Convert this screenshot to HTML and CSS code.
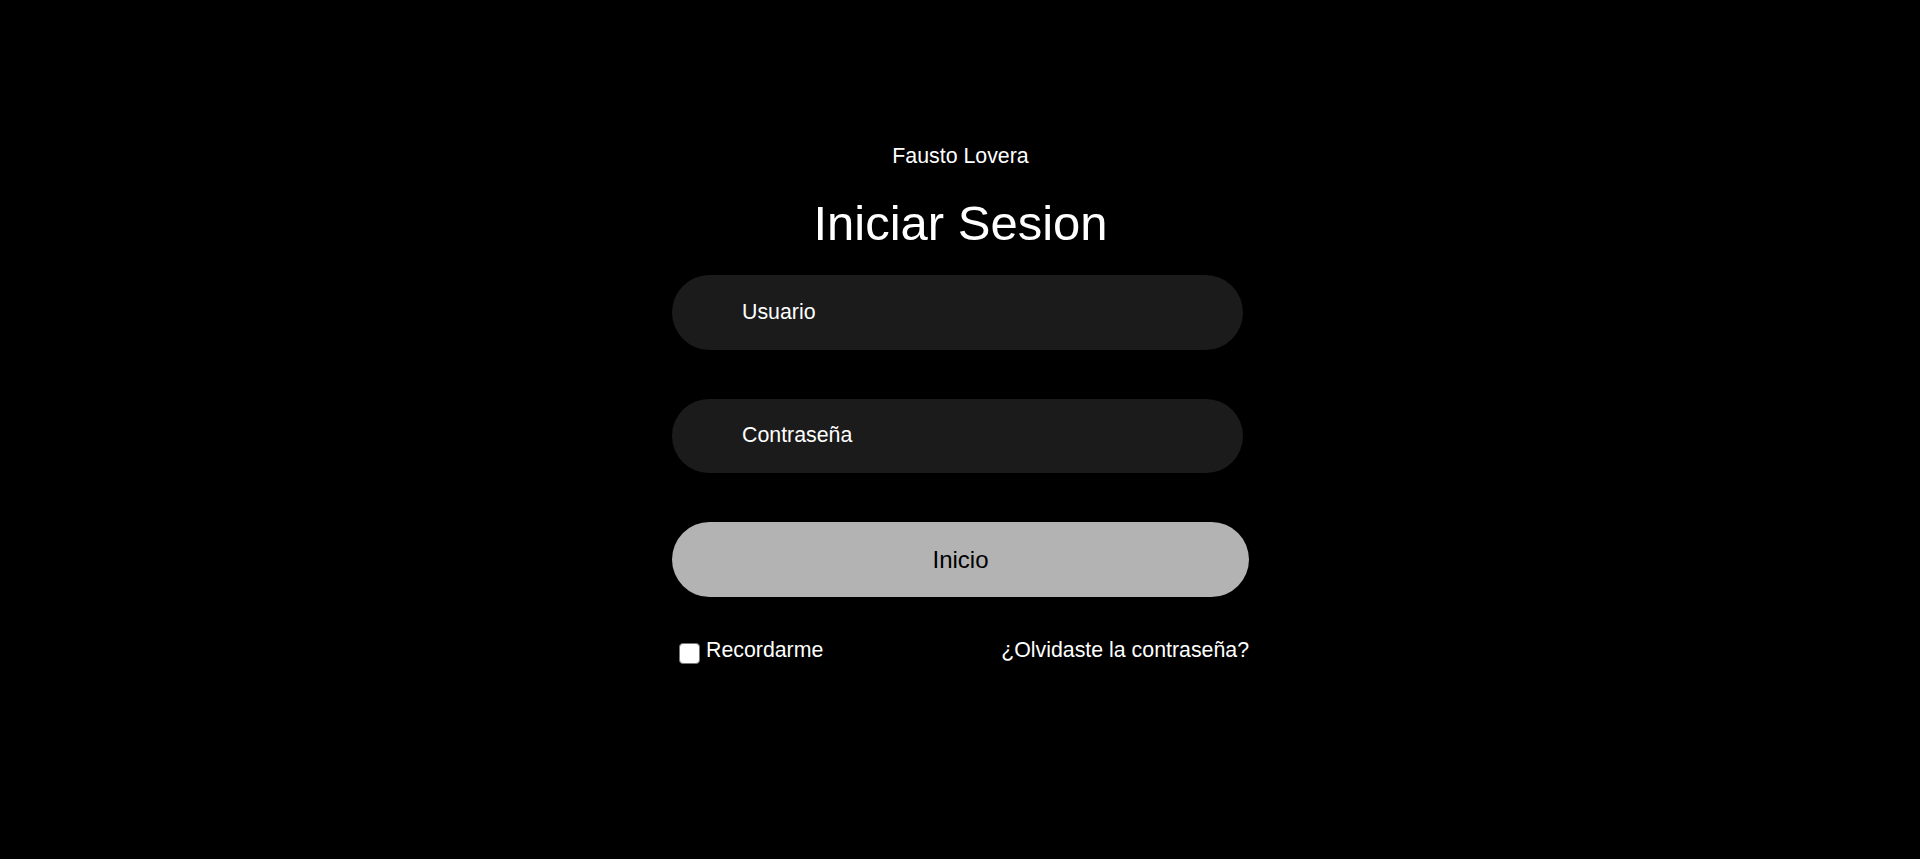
FILE: index.html
```html
<!DOCTYPE html>
<html lang="es">
<head>
<meta charset="utf-8">
<title>Iniciar Sesion</title>
<link rel="stylesheet" href="styles.css">
</head>
<body>
<main class="page">
  <p class="brand">Fausto Lovera</p>
  <h1 class="title">Iniciar Sesion</h1>
  <form class="form">
    <input class="field" type="text" placeholder="Usuario">
    <input class="field" type="password" placeholder="Contraseña">
    <button class="submit" type="button">Inicio</button>
    <div class="extras">
      <label class="remember"><input class="check" type="checkbox"><span>Recordarme</span></label>
      <a class="forgot" href="#">¿Olvidaste la contraseña?</a>
    </div>
  </form>
</main>
</body>
</html>
```
FILE: styles.css
```css
html, body {
  margin: 0;
  padding: 0;
  background: #000;
}
body {
  font-family: "Liberation Sans", Arial, sans-serif;
  color: #fff;
}
.page {
  display: flex;
  flex-direction: column;
  align-items: center;
  padding-top: 144px;
  padding-left: 1px;
}
.brand {
  margin: 0;
  font-size: 21.33px;
  line-height: 24px;
}
.title {
  margin: 27px 0 0;
  font-size: 49px;
  font-weight: normal;
  line-height: 56px;
}
.form {
  margin-top: 24px;
  width: 577px;
  display: flex;
  flex-direction: column;
  align-items: flex-start;
}
.field {
  box-sizing: border-box;
  width: 571px;
  height: 74.5px;
  margin: 0 0 49px;
  padding: 0 0 0 70px;
  border: none;
  border-radius: 38px;
  background: #1b1b1b;
  color: #fff;
  font-family: "Liberation Sans", Arial, sans-serif;
  font-size: 21.33px;
  outline: none;
}
.field::placeholder {
  color: #fff;
  opacity: 1;
}
.submit {
  box-sizing: border-box;
  width: 577px;
  height: 75px;
  margin: 0;
  padding: 0 0 0 0;
  border: none;
  border-radius: 38px;
  background: #b3b3b3;
  color: #000;
  font-family: "Liberation Sans", Arial, sans-serif;
  font-size: 24px;
  line-height: 26px;
  padding-top: 1px;
}
.extras {
  margin-top: 40.5px;
  width: 100%;
  display: flex;
  justify-content: space-between;
  align-items: flex-start;
  font-size: 21.33px;
  line-height: 24px;
}
.remember {
  display: flex;
  align-items: flex-start;
}
.check {
  appearance: none;
  -webkit-appearance: none;
  box-sizing: border-box;
  width: 21px;
  height: 21px;
  margin: 5.5px 6.5px 0 6.5px;
  border: 1px solid #767676;
  border-radius: 4px;
  background: #fff;
}
.forgot {
  color: #fff;
  text-decoration: none;
}
```
